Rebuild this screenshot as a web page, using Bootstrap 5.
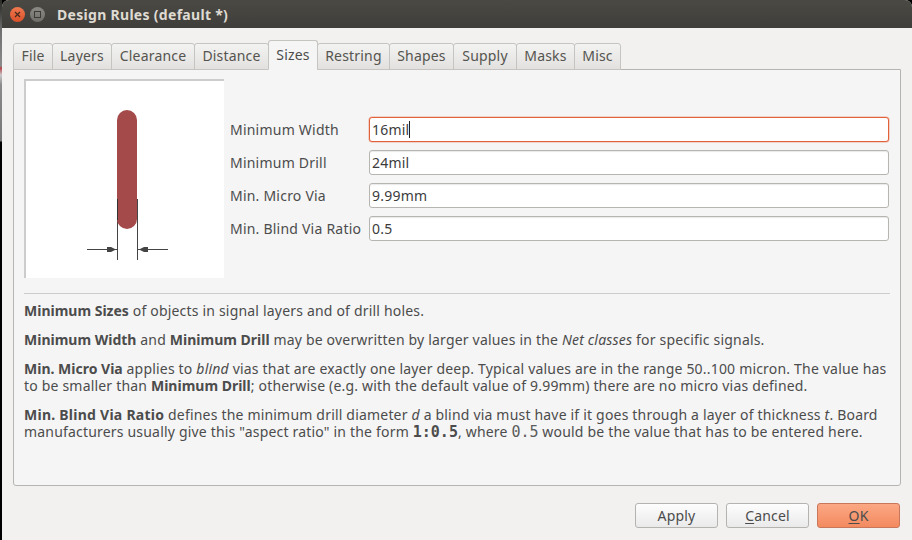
<!DOCTYPE html>
<html lang="en">
<head>
<meta charset="utf-8">
<title>Design Rules</title>
<link href="https://cdn.jsdelivr.net/npm/bootstrap@5.3.0/dist/css/bootstrap.min.css" rel="stylesheet">
<style>
html,body{width:912px;height:540px;overflow:hidden;margin:0;background:#000}
body{font-family:"Noto Sans","Open Sans",sans-serif;font-size:14px;line-height:17px;color:#4c4c4c;letter-spacing:.19px}
.desk{width:912px;height:540px;display:flex}
.strip{width:2px;flex:none;background:linear-gradient(#2e2e2b 0,#3c3c3a 10px,#6f6f6f 30px,#8a8a8a 66px,#b5434a 68px,#c9c9c9 75px,#8a8a8a 85px,#777 141px,#000 142px)}
.win{flex:1;display:flex;flex-direction:column;background:#f2f1f0;border-radius:7px 7px 0 0;overflow:hidden}
.ttl{height:28px;flex:none;background:linear-gradient(#4a4944,#3f3e3a);color:#dfdbd2;font-weight:700;font-size:14px;letter-spacing:.3px;display:flex;align-items:center;padding-left:8px}
.wb{width:15px;height:15px;border-radius:50%;display:flex;align-items:center;justify-content:center;margin-right:5px}
.wb-x{background:linear-gradient(#f0794f,#d9502a)}
.wb-m{background:linear-gradient(#8b8a85,#6f6e69)}
.ttl-t{margin-left:7px}
.body-area{flex:1;display:flex;flex-direction:column;padding:12px 11px 0 11px}
.tabbar{display:flex;align-items:flex-end;height:30px;flex:none;position:relative;z-index:1;margin-bottom:-1px}
.tb{height:27px;flex:none;margin-right:-1px;border:1px solid #c6c4c0;border-radius:3px 3px 0 0;background:linear-gradient(#f3f3f2,#e2e1df);display:flex;align-items:center;justify-content:center;padding-bottom:3px;color:#55544f;white-space:nowrap}
.tb:nth-child(1){width:40px}
.tb:nth-child(2){width:60px}
.tb:nth-child(3){width:84px}
.tb:nth-child(4){width:75px}
.tb:nth-child(5){width:50px}
.tb:nth-child(6){width:73px}
.tb:nth-child(7){width:65px}
.tb:nth-child(8){width:64px}
.tb:nth-child(9){width:59px}
.tb:nth-child(10){width:47px}
.tb-on{height:30px;padding-bottom:1px;background:#f5f5f5;border-color:#c6c4c0;border-bottom-color:#f5f5f5;color:#4c4c4c}
.pane{height:417px;flex:none;background:#f5f5f5;border:1px solid #b6b4b0;border-radius:0 0 3px 3px;padding:9px 10px 0 10px}
.toprow{display:flex;height:199px}
.pic{width:200px;height:199px;flex:none;background:#fff;border-top:2px solid #ccc;border-left:2px solid #ccc;display:block}
.frm{margin-left:6px;margin-right:1px;flex:1;display:flex;flex-direction:column;gap:8px;padding-top:38px;letter-spacing:.22px}
.rowf{display:flex;align-items:center;height:25px}
.lab{width:139px;flex:none;white-space:nowrap}
.inp{flex:1;height:25px;background:#fff;border:1px solid #b7b5b1;border-radius:3px;padding:0 2px;display:flex;align-items:center;color:#3c3c3c;box-shadow:inset 0 1px 1px #e9e9e9}
.inp-on{border-color:#e2603a;box-shadow:0 0 0 .5px #eeb09b}
.caret-bar{display:inline-block;width:1px;height:17px;background:#222}
.sep{height:1px;background:#cdcccb;margin:15px 0 0 0}
.txt{margin-top:8px;width:866px}
.txt p{margin:0 0 12px 0}
.txt b{font-weight:700;letter-spacing:0}
.txt b.wider{letter-spacing:.25px}
.mono{font-family:"DejaVu Sans Mono",monospace;font-size:15px;letter-spacing:0}
.mono-reg{color:#5c5c5c}
.acts{display:flex;justify-content:flex-end;gap:8px;padding:17px 1px 0 0}
.bn{width:83px;height:25px;border:1px solid #b5b3af;border-radius:3px;background:linear-gradient(#fdfdfd,#eaeaea);display:flex;align-items:center;justify-content:center;color:#4c4c4c}
.bn-ok{background:linear-gradient(#fba884,#f38a5f);border-color:#c8775a}
.bn u{text-underline-offset:2px}
</style>
</head>
<body>
<div class="desk">
<div class="strip"></div>
<div class="win">
  <div class="ttl">
    <span class="wb wb-x"><svg width="7" height="7" viewBox="0 0 7 7"><path d="M1 1l5 5M6 1l-5 5" stroke="#4a2a1c" stroke-width="1.3"/></svg></span>
    <span class="wb wb-m"><svg width="7" height="7" viewBox="0 0 7 7"><rect x=".5" y=".5" width="6" height="6" fill="none" stroke="#3c3b37"/></svg></span>
    <span class="ttl-t">Design Rules (default *)</span>
  </div>
  <div class="body-area">
    <div class="tabbar">
      <div class="tb">File</div><div class="tb">Layers</div><div class="tb">Clearance</div><div class="tb">Distance</div><div class="tb tb-on">Sizes</div><div class="tb">Restring</div><div class="tb">Shapes</div><div class="tb">Supply</div><div class="tb">Masks</div><div class="tb">Misc</div>
    </div>
    <div class="pane">
      <div class="toprow">
        <svg class="pic" width="200" height="199" viewBox="26 81 198 197">
          <path d="M117.5 199v61M137.5 199v61" stroke="#444" stroke-width="1" fill="none"/>
          <rect x="117" y="110" width="20" height="119" rx="10" fill="#a54a4a"/>
          <path d="M117.5 199v21" stroke="#333" stroke-width="1" fill="none"/>
          <path d="M87 249.5h30M138 249.5h30" stroke="#444" stroke-width="1"/>
          <path d="M107 247h4l5 2.5-5 2.5h-4zM148 247h-4l-5 2.5 5 2.5h4z" fill="#444"/>
        </svg>
        <div class="frm">
          <div class="rowf"><div class="lab">Minimum Width</div><div class="inp inp-on"><span>16mil</span><span class="caret-bar"></span></div></div>
          <div class="rowf"><div class="lab">Minimum Drill</div><div class="inp">24mil</div></div>
          <div class="rowf"><div class="lab">Min. Micro Via</div><div class="inp">9.99mm</div></div>
          <div class="rowf"><div class="lab">Min. Blind Via Ratio</div><div class="inp">0.5</div></div>
        </div>
      </div>
      <div class="sep"></div>
      <div class="txt">
        <p><b>Minimum Sizes</b> of objects in signal layers and of drill holes.</p>
        <p><b>Minimum Width</b> and <b>Minimum Drill</b> may be overwritten by larger values in the <i>Net classes</i> for specific signals.</p>
        <p><b>Min. Micro Via</b> applies to <i>blind</i> vias that are exactly one layer deep. Typical values are in the range 50..100 micron. The value has to be smaller than <b>Minimum Drill</b>; otherwise (e.g. with the default value of 9.99mm) there are no micro vias defined.</p>
        <p><b class="wider">Min. Blind Via Ratio</b> defines the minimum drill diameter <i>d</i> a blind via must have if it goes through a layer of thickness <i>t</i>. Board manufacturers usually give this "aspect ratio" in the form <b class="mono">1:0.5</b>, where <span class="mono mono-reg">0.5</span> would be the value that has to be entered here.</p>
      </div>
    </div>
    <div class="acts">
      <div class="bn">Apply</div>
      <div class="bn"><span><u>C</u>ancel</span></div>
      <div class="bn bn-ok"><span><u>O</u>K</span></div>
    </div>
  </div>
</div>
</div>
<script src="https://cdn.jsdelivr.net/npm/bootstrap@5.3.0/dist/js/bootstrap.bundle.min.js"></script>
</body>
</html>
